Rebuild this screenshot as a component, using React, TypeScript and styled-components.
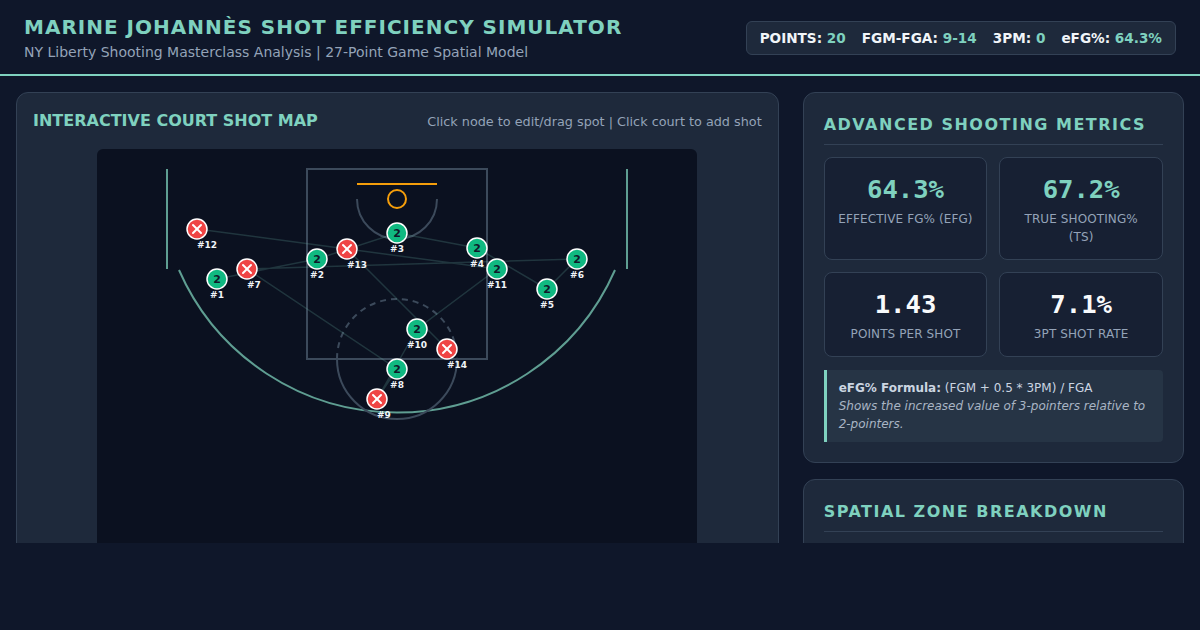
import React from 'react';
import styled, { createGlobalStyle } from 'styled-components';

type Shot = { id: number; x: number; y: number; made: boolean; pts: number };

const shots: Shot[] = [
  { id: 1, x: 120, y: 130, made: true, pts: 2 },
  { id: 2, x: 220, y: 110, made: true, pts: 2 },
  { id: 3, x: 300, y: 84, made: true, pts: 2 },
  { id: 4, x: 380, y: 99, made: true, pts: 2 },
  { id: 5, x: 450, y: 140, made: true, pts: 2 },
  { id: 6, x: 480, y: 110, made: true, pts: 2 },
  { id: 7, x: 150, y: 120, made: false, pts: 2 },
  { id: 8, x: 300, y: 220, made: true, pts: 2 },
  { id: 9, x: 280, y: 250, made: false, pts: 2 },
  { id: 10, x: 320, y: 180, made: true, pts: 2 },
  { id: 11, x: 400, y: 120, made: true, pts: 2 },
  { id: 12, x: 100, y: 80, made: false, pts: 2 },
  { id: 13, x: 250, y: 100, made: false, pts: 2 },
  { id: 14, x: 350, y: 200, made: false, pts: 2 },
];

const metrics = [
  { value: '64.3%', label: 'Effective FG% (eFG)', accent: true },
  { value: '67.2%', label: 'True Shooting% (TS)', accent: true },
  { value: '1.43', label: 'Points Per Shot', accent: false },
  { value: '7.1%', label: '3PT Shot Rate', accent: false },
];

const GlobalStyle = createGlobalStyle`
  body {
    margin: 0;
    background: #0f172a;
    color: #e2e8f0;
    font-family: "DejaVu Sans", Verdana, sans-serif;
  }
`;

const App = () => {
  const path = shots.map((s, i) => `${i === 0 ? 'M' : 'L'} ${s.x} ${s.y}`).join(' ');

  return (
    <>
      <GlobalStyle />
      <Header>
        <div>
          <Title>Marine Johannès Shot Efficiency Simulator</Title>
          <Subtitle>NY Liberty Shooting Masterclass Analysis | 27-Point Game Spatial Model</Subtitle>
        </div>
        <StatsBar>
          <Stat>POINTS: <StatValue>20</StatValue></Stat>
          <Stat>FGM-FGA: <StatValue>9-14</StatValue></Stat>
          <Stat>3PM: <StatValue>0</StatValue></Stat>
          <Stat>eFG%: <StatValue>64.3%</StatValue></Stat>
        </StatsBar>
      </Header>

      <Main>
        <Grid>
          <Card>
            <CardHead>
              <CourtTitle>Interactive Court Shot Map</CourtTitle>
              <Hint>Click node to edit/drag spot | Click court to add shot</Hint>
            </CardHead>
            <CourtWrap>
              <svg width="600" height="470" viewBox="0 0 600 470">
                <line x1="70" y1="20" x2="70" y2="120" stroke="#5f9e92" strokeWidth="2" />
                <line x1="530" y1="20" x2="530" y2="120" stroke="#5f9e92" strokeWidth="2" />
                <path d="M 82 121 A 238 238 0 0 0 518 121" fill="none" stroke="#5f9e92" strokeWidth="2" />
                <rect x="210" y="20" width="180" height="190" fill="none" stroke="#3c4a5b" strokeWidth="2" />
                <path d="M 240 210 A 60 60 0 0 1 360 210" fill="none" stroke="#3c4a5b" strokeWidth="2" strokeDasharray="6 5" />
                <path d="M 240 210 A 60 60 0 0 0 360 210" fill="none" stroke="#3c4a5b" strokeWidth="2" />
                <path d="M 260 50 A 40 40 0 0 0 340 50" fill="none" stroke="#3c4a5b" strokeWidth="2" />
                <line x1="260" y1="35" x2="340" y2="35" stroke="#f59e0b" strokeWidth="2" />
                <circle cx="300" cy="50" r="9" fill="none" stroke="#f59e0b" strokeWidth="2" />

                <path d={path} fill="none" stroke="#6fb8a8" strokeOpacity="0.22" strokeWidth="1.5" />

                {shots.map(s => (
                  <g key={s.id}>
                    <circle cx={s.x} cy={s.y} r="10" fill={s.made ? '#10b981' : '#ef4444'} stroke="#ffffff" strokeWidth="1.5" />
                    {s.made ? (
                      <NodeText x={s.x} y={s.y + 4} textAnchor="middle">{s.pts}</NodeText>
                    ) : (
                      <g stroke="#ffffff" strokeWidth="2" strokeLinecap="round">
                        <line x1={s.x - 4} y1={s.y - 4} x2={s.x + 4} y2={s.y + 4} />
                        <line x1={s.x + 4} y1={s.y - 4} x2={s.x - 4} y2={s.y + 4} />
                      </g>
                    )}
                    <NodeLabel x={s.x} y={s.y + 19} textAnchor={s.made ? 'middle' : 'start'}>#{s.id}</NodeLabel>
                  </g>
                ))}
              </svg>
            </CourtWrap>
          </Card>

          <Side>
            <Panel>
              <PanelTitle>Advanced Shooting Metrics</PanelTitle>
              <MetricGrid>
                {metrics.map(m => (
                  <Metric key={m.label}>
                    <MetricValue $accent={m.accent}>{m.value}</MetricValue>
                    <MetricLabel>{m.label}</MetricLabel>
                  </Metric>
                ))}
              </MetricGrid>
              <Formula>
                <div><strong>eFG% Formula:</strong> (FGM + 0.5 * 3PM) / FGA</div>
                <em>Shows the increased value of 3-pointers relative to 2-pointers.</em>
              </Formula>
            </Panel>
            <Panel>
              <PanelTitle>Spatial Zone Breakdown</PanelTitle>
            </Panel>
          </Side>
        </Grid>
      </Main>
    </>
  );
};

export default App;

const Header = styled.header`
  display: flex;
  justify-content: space-between;
  align-items: center;
  height: 76px;
  box-sizing: border-box;
  padding: 2px 24px 0;
  border-bottom: 2px solid #7fd1bf;
`;

const Title = styled.h1`
  margin: 0;
  font-size: 20px;
  line-height: 24px;
  font-weight: bold;
  letter-spacing: 1px;
  text-transform: uppercase;
  color: #7fd1bf;
`;

const Subtitle = styled.div`
  margin-top: 5px;
  font-size: 14px;
  line-height: 17px;
  color: #94a3b8;
`;

const StatsBar = styled.div`
  display: flex;
  gap: 16px;
  padding: 8px 13px;
  background: #1e293b;
  border: 1px solid #334155;
  border-radius: 6px;
  font-size: 13.6px;
  line-height: 16px;
  font-weight: bold;
  color: #f1f5f9;
`;

const Stat = styled.span`
  white-space: nowrap;
`;

const StatValue = styled.span`
  color: #7fd1bf;
`;

const Main = styled.main`
  padding: 16px 16px 0;
`;

const Grid = styled.div`
  display: grid;
  grid-template-columns: 2fr 1fr;
  gap: 24px;
  height: 451px;
  overflow: hidden;
  align-items: start;
`;

const Card = styled.section`
  background: #1e293b;
  border: 1px solid #334155;
  border-radius: 12px;
  padding: 16px;
`;

const CardHead = styled.div`
  display: flex;
  justify-content: space-between;
  align-items: center;
  margin-bottom: 17px;
  padding-top: 1px;
`;

const CourtTitle = styled.h2`
  margin: 0;
  font-size: 16px;
  line-height: 22px;
  text-transform: uppercase;
  color: #7fd1bf;
`;

const Hint = styled.span`
  font-size: 12.8px;
  color: #94a3b8;
`;

const CourtWrap = styled.div`
  width: 600px;
  margin: 0 auto;
  background: #0b1120;
  border-radius: 6px;
  overflow: hidden;

  svg {
    display: block;
  }
`;

const NodeText = styled.text`
  font-family: "DejaVu Sans", sans-serif;
  font-size: 11px;
  font-weight: bold;
  fill: #0f172a;
`;

const NodeLabel = styled.text`
  font-family: "DejaVu Sans", sans-serif;
  font-size: 9px;
  font-weight: bold;
  fill: #f1f5f9;
`;

const Side = styled.div`
  display: flex;
  flex-direction: column;
  gap: 16px;
`;

const Panel = styled.section`
  background: #1e293b;
  border: 1px solid #334155;
  border-radius: 12px;
  padding: 20px;
`;

const PanelTitle = styled.h2`
  margin: 0 0 12px;
  padding-top: 1px;
  padding-bottom: 9px;
  border-bottom: 1px solid #334155;
  font-size: 16px;
  line-height: 21px;
  letter-spacing: 1.5px;
  text-transform: uppercase;
  color: #7fd1bf;
`;

const MetricGrid = styled.div`
  display: grid;
  grid-template-columns: 1fr 1fr;
  gap: 12px;
`;

const Metric = styled.div`
  background: #172033;
  border: 1px solid #334155;
  border-radius: 8px;
  padding: 16px 12px 13px;
  text-align: center;
`;

const MetricValue = styled.div<{ $accent: boolean }>`
  font-family: "DejaVu Sans Mono", monospace;
  font-size: 25.6px;
  line-height: 30px;
  font-weight: bold;
  color: ${p => (p.$accent ? '#7fd1bf' : '#f8fafc')};
`;

const MetricLabel = styled.div`
  margin-top: 6px;
  font-size: 12px;
  line-height: 18px;
  letter-spacing: 0.1px;
  text-transform: uppercase;
  color: #94a3b8;
`;

const Formula = styled.div`
  margin-top: 13px;
  padding: 9px 12px;
  background: #263445;
  border-left: 3px solid #7fd1bf;
  border-radius: 0 4px 4px 0;
  font-size: 12px;
  line-height: 18px;
  color: #cbd5e1;

  strong {
    color: #cbd5e1;
  }

  em {
    color: #a9b5c4;
  }
`;
